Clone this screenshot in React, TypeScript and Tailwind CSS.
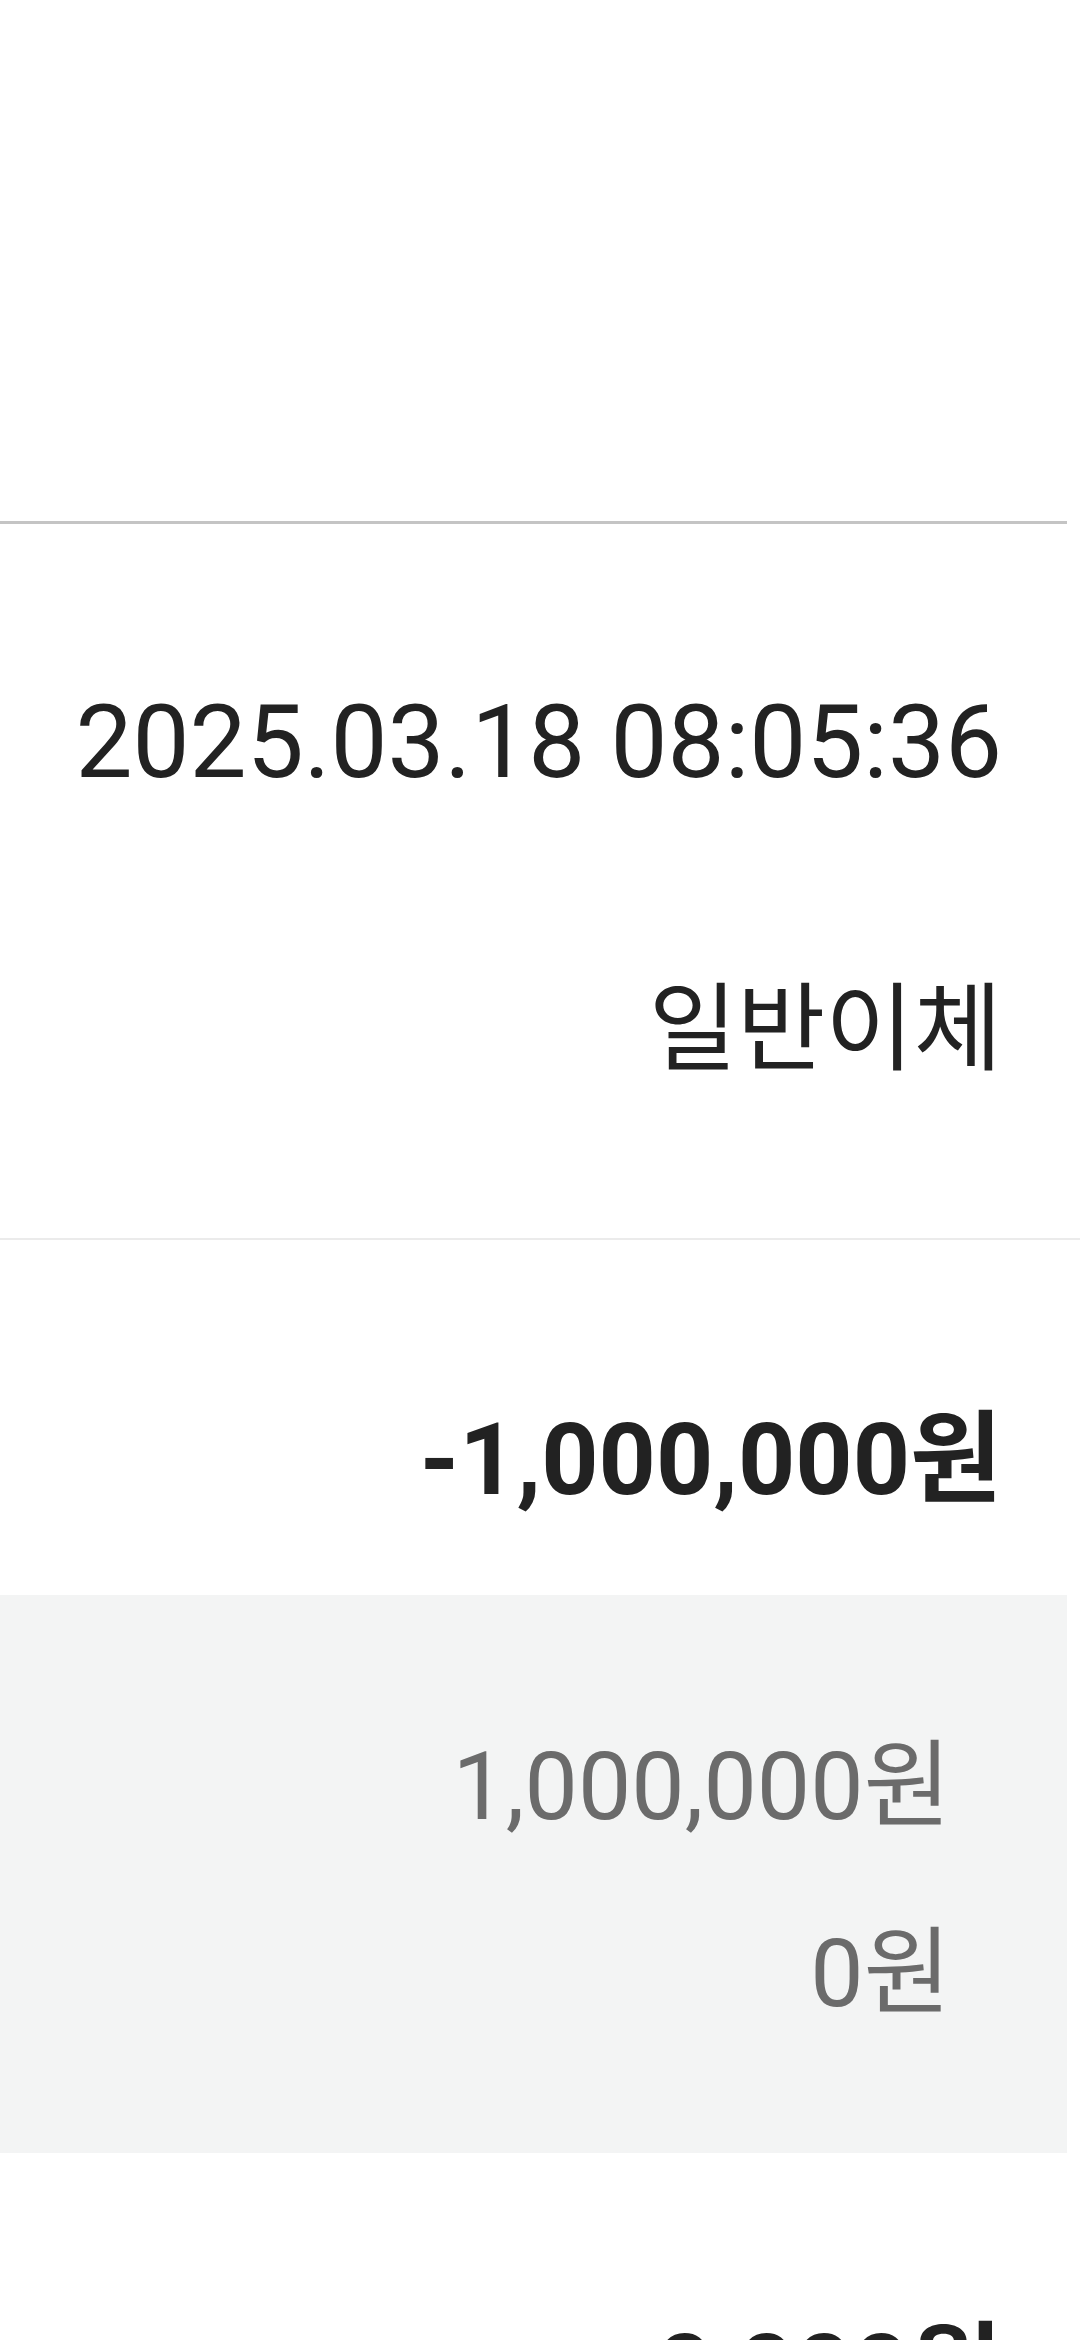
import React from "react";

export default function App() {
  return (
    <div className="w-[1080px] h-[2340px] overflow-hidden bg-white font-['Roboto','Noto_Sans_CJK_KR',sans-serif] text-[#222222]">
      <div className="h-[521px]" />
      <div className="h-[3px] w-[1067px] bg-[#c4c4c4]" />
      <div className="flex flex-col items-end pr-[78px] pt-[168px] pb-[161px]">
        <div className="text-[101.5px] leading-none">2025.03.18 08:05:36</div>
        <div className="mt-[187px] text-[96px] leading-none">일반이체</div>
      </div>
      <div className="h-[2px] w-full bg-[#ebebeb]" />
      <div className="flex flex-col items-end pr-[78px] pt-[170px] pb-[85px]">
        <div className="text-[100px] font-bold leading-none">-1,000,000원</div>
      </div>
      <div className="flex w-[1067px] flex-col items-end bg-[#f3f4f4] pr-[116px] pt-[144px] pb-[132px] text-[#6b6b6b]">
        <div className="text-[95px] leading-none">1,000,000원</div>
        <div className="mt-[92px] text-[95px] leading-none">0원</div>
      </div>
      <div className="flex flex-col items-end pr-[78px] pt-[168px]">
        <div className="text-[100px] font-bold leading-none">0,000원</div>
      </div>
    </div>
  );
}
